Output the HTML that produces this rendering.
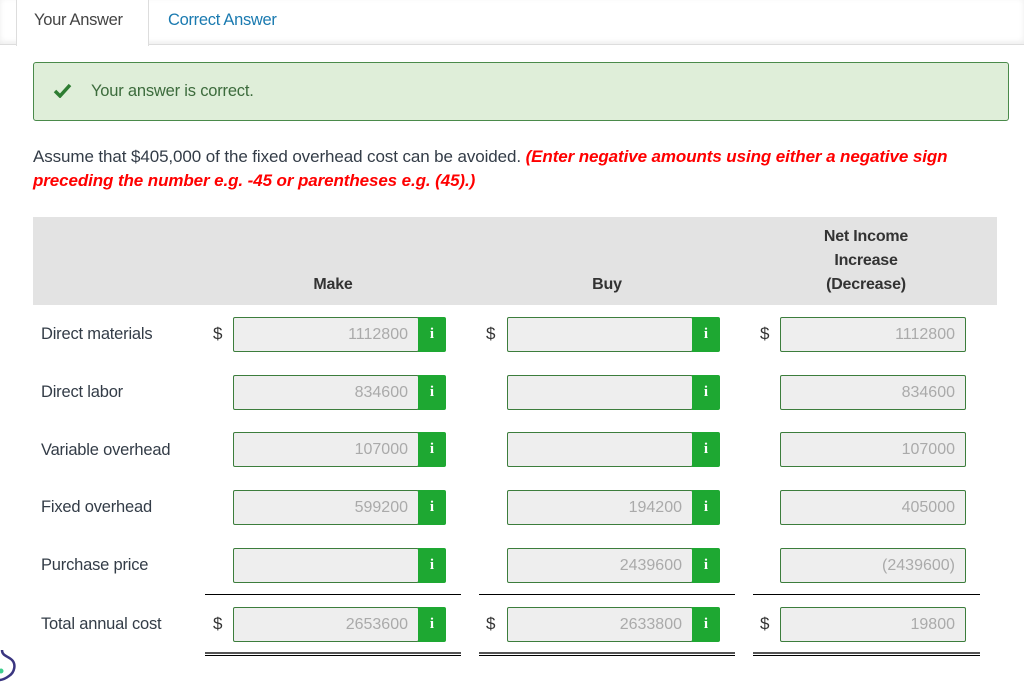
<!DOCTYPE html>
<html><head><meta charset="utf-8"><style>
*{margin:0;padding:0;box-sizing:border-box}
body{width:1024px;height:696px;background:#fff;font-family:"Liberation Sans",sans-serif;color:#333c47;position:relative;overflow:hidden}
.a{position:absolute}
.tabbar{left:0;top:0;width:1024px;height:45px;border-bottom:1px solid #ddd;box-shadow:0 -2px 6px rgba(0,0,0,.08) inset}
.tab1{left:16px;top:0;width:133px;height:46px;background:#fff;border-left:1px solid #ddd;border-right:1px solid #ddd;font-size:16.5px;color:#444;padding:11px 0 0 17px;letter-spacing:-.3px}
.tab2{left:168px;top:11px;font-size:16.5px;color:#1a7ab0;letter-spacing:-.3px}
.ok{left:33px;top:62px;width:976px;height:59px;background:#dfeed9;border:1px solid #4a8a4a;border-radius:3px}
.ok span{position:absolute;left:57px;top:19px;font-size:16.5px;color:#3c6b3c;letter-spacing:-.2px}
.q{left:33px;top:145px;font-size:17px;line-height:24px;width:990px;letter-spacing:-.1px;white-space:nowrap}
.q b{color:#f00;font-style:italic}
.hd{left:33px;top:217px;width:964px;height:88px;background:#e3e3e3}
.h{font-weight:bold;font-size:16px;color:#333;text-align:center;line-height:24px;letter-spacing:-.2px}
.lbl{left:41px;font-size:16.5px;letter-spacing:-.2px}
.d{font-size:17px;color:#333}
.in{height:35px;background:#eee;border:1px solid #3c7d3c;border-radius:2px;text-align:right;color:#aaa;font-size:16px;line-height:33px;padding-right:10px}
.ib{width:28px;height:35px;background:#1ea832;color:#fff;font-weight:bold;font-size:15px;text-align:center;line-height:35px;font-family:"Liberation Serif",serif;border-radius:0 2px 2px 0}
.ln{height:1px;background:#000}
.dl{height:4px;border-top:2px solid #555;border-bottom:1px solid #000}
</style></head><body>
<div class="a tabbar"></div>
<div class="a tab1">Your Answer</div>
<div class="a tab2">Correct Answer</div>
<div class="a ok"><svg class="a" style="left:19px;top:20px" width="19" height="15" viewBox="0 0 19 15"><path d="M2 8l5 5L17 2" stroke="#2e7d32" stroke-width="3.5" fill="none"/></svg><span>Your answer is correct.</span></div>
<div class="a q">Assume that $405,000 of the fixed overhead cost can be avoided. <b>(Enter negative amounts using either a negative sign<br>preceding the number e.g. -45 or parentheses e.g. (45).)</b></div>
<div class="a hd"></div>
<div class="a h" style="left:233px;top:273px;width:200px">Make</div>
<div class="a h" style="left:507px;top:273px;width:200px">Buy</div>
<div class="a h" style="left:780px;top:225px;width:172px">Net Income<br>Increase<br>(Decrease)</div>

<div class="a lbl" style="top:325px">Direct materials</div>
<div class="a lbl" style="top:383px">Direct labor</div>
<div class="a lbl" style="top:441px">Variable overhead</div>
<div class="a lbl" style="top:498px">Fixed overhead</div>
<div class="a lbl" style="top:556px">Purchase price</div>
<div class="a lbl" style="top:615px">Total annual cost</div>

<div class="a d" style="left:213px;top:324px">$</div><div class="a d" style="left:486px;top:324px">$</div><div class="a d" style="left:760px;top:324px">$</div>
<div class="a d" style="left:213px;top:614px">$</div><div class="a d" style="left:486px;top:614px">$</div><div class="a d" style="left:760px;top:614px">$</div>

<div class="a in" style="left:233px;top:317px;width:186px">1112800</div><div class="a ib" style="left:418px;top:317px">i</div>
<div class="a in" style="left:507px;top:317px;width:186px"></div><div class="a ib" style="left:692px;top:317px">i</div>
<div class="a in" style="left:780px;top:317px;width:186px">1112800</div>

<div class="a in" style="left:233px;top:375px;width:186px">834600</div><div class="a ib" style="left:418px;top:375px">i</div>
<div class="a in" style="left:507px;top:375px;width:186px"></div><div class="a ib" style="left:692px;top:375px">i</div>
<div class="a in" style="left:780px;top:375px;width:186px">834600</div>

<div class="a in" style="left:233px;top:432px;width:186px">107000</div><div class="a ib" style="left:418px;top:432px">i</div>
<div class="a in" style="left:507px;top:432px;width:186px"></div><div class="a ib" style="left:692px;top:432px">i</div>
<div class="a in" style="left:780px;top:432px;width:186px">107000</div>

<div class="a in" style="left:233px;top:490px;width:186px">599200</div><div class="a ib" style="left:418px;top:490px">i</div>
<div class="a in" style="left:507px;top:490px;width:186px">194200</div><div class="a ib" style="left:692px;top:490px">i</div>
<div class="a in" style="left:780px;top:490px;width:186px">405000</div>

<div class="a in" style="left:233px;top:548px;width:186px"></div><div class="a ib" style="left:418px;top:548px">i</div>
<div class="a in" style="left:507px;top:548px;width:186px">2439600</div><div class="a ib" style="left:692px;top:548px">i</div>
<div class="a in" style="left:780px;top:548px;width:186px">(2439600)</div>

<div class="a in" style="left:233px;top:607px;width:186px">2653600</div><div class="a ib" style="left:418px;top:607px">i</div>
<div class="a in" style="left:507px;top:607px;width:186px">2633800</div><div class="a ib" style="left:692px;top:607px">i</div>
<div class="a in" style="left:780px;top:607px;width:186px">19800</div>

<div class="a ln" style="left:205px;top:594px;width:256px"></div>
<div class="a ln" style="left:479px;top:594px;width:256px"></div>
<div class="a ln" style="left:753px;top:594px;width:227px"></div>
<div class="a dl" style="left:205px;top:652px;width:256px"></div>
<div class="a dl" style="left:479px;top:652px;width:256px"></div>
<div class="a dl" style="left:753px;top:652px;width:227px"></div>

<svg class="a" style="left:0;top:650px" width="20" height="40" viewBox="0 0 20 40"><path d="M2 0c0 6 6 6 10 10 4 4 3 12-3 16-4 3-8 4-10 4" stroke="#3a3580" stroke-width="2.5" fill="none"/><circle cx="1" cy="21" r="2.5" fill="#3ecf8e"/></svg>
</body></html>
